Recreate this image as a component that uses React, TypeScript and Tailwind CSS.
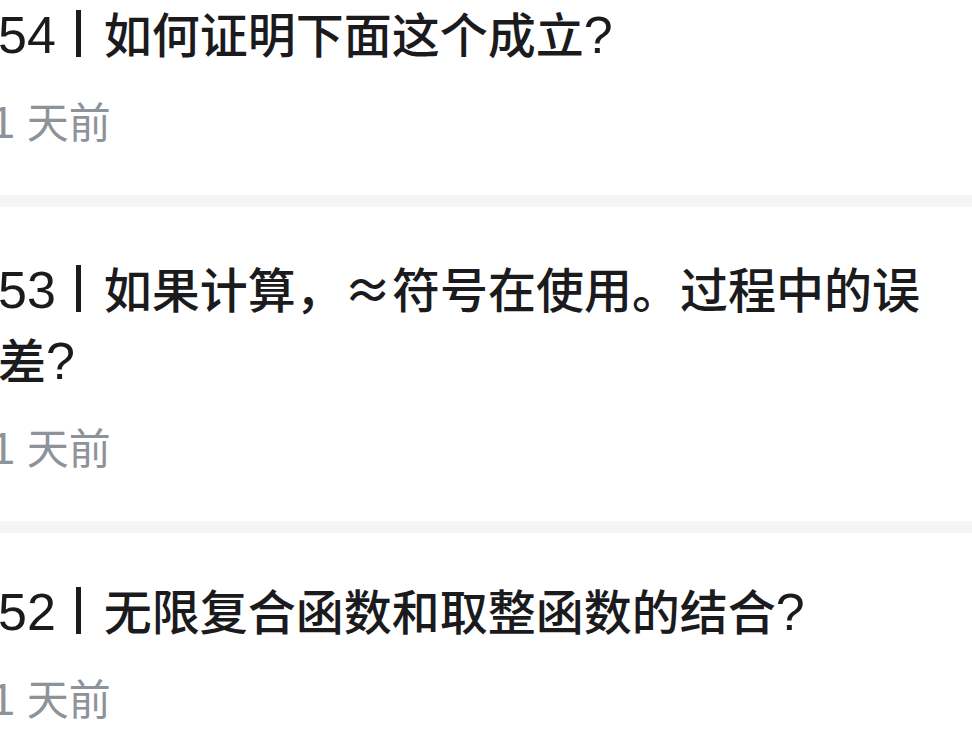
import React from 'react';

type Post = {
  no: string;
  parts: React.ReactNode;
  time: string;
};

const latin = "font-['Liberation_Sans','Noto_Sans_CJK_SC',sans-serif]";
const cjk = "font-['Noto_Sans_CJK_SC',sans-serif]";

const Num: React.FC<{ children: React.ReactNode }> = ({ children }) => (
  <span className={`${latin} text-[52px] leading-none`}>{children}</span>
);

const posts: Post[] = [
  {
    no: '54',
    parts: (
      <>
        如何证明下面这个成立<Num>?</Num>
      </>
    ),
    time: '天前',
  },
  {
    no: '53',
    parts: (
      <>
        如果计算，<span className={cjk}>≈</span>符号在使用。过程中的误差<Num>?</Num>
      </>
    ),
    time: '天前',
  },
  {
    no: '52',
    parts: (
      <>
        无限复合函数和取整函数的结合<Num>?</Num>
      </>
    ),
    time: '天前',
  },
];

const PostItem: React.FC<{ post: Post }> = ({ post }) => (
  <div className="pt-[45px] pb-[41px] pr-[48px]">
    <h3
      className={`${latin} -ml-[2px] text-[48px] leading-[71px] font-medium text-[#1b1b1d]`}
    >
      <Num>{post.no}</Num>
      <span className="inline-block w-[5px] h-[47px] ml-[20px] mr-[23px] align-[-4px] bg-[#1b1b1d]" />
      {post.parts}
    </h3>
    <p className={`${latin} -ml-[10px] mt-[22px] text-[42px] leading-[60px] text-[#8e9299]`}>
      <span className="text-[45px] leading-none">1</span> {post.time}
    </p>
  </div>
);

export default function App() {
  return (
    <div className="w-[972px] h-[733px] overflow-hidden bg-white">
      <div className="-mt-[44px] flex flex-col">
        {posts.map((post, i) => (
          <React.Fragment key={post.no}>
            {i > 0 && <div className="h-[12px] bg-[#f4f5f7]" />}
            <PostItem post={post} />
          </React.Fragment>
        ))}
      </div>
    </div>
  );
}
